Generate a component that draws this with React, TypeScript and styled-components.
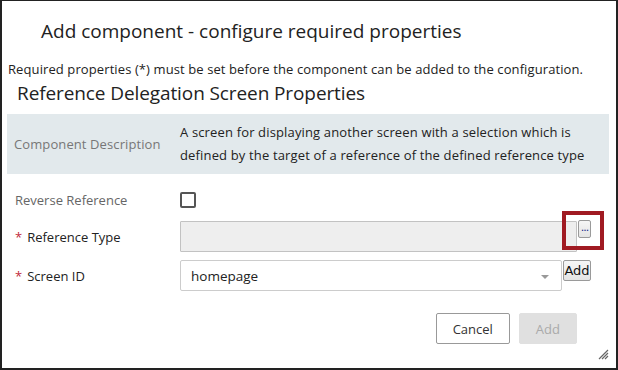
import styled, { createGlobalStyle } from "styled-components";

const GlobalStyle = createGlobalStyle`
  html, body {
    margin: 0;
    padding: 0;
    background: #ffffff;
  }
  body {
    font-family: "Open Sans", "Noto Sans", sans-serif;
    color: #222;
  }
`;

const Dialog = styled.div`
  position: relative;
  box-sizing: border-box;
  width: 618px;
  height: 370px;
  background: #fff;
  border: 2px solid #222;
  border-top-width: 1px;
  display: flex;
  flex-direction: column;
`;

const Title = styled.h1`
  margin: 0;
  padding: 17px 0 0 39px;
  height: 44px;
  box-sizing: border-box;
  font-size: 19px;
  font-weight: 400;
  line-height: 26px;
  color: #222;
`;

const Intro = styled.p`
  margin: 15px 0 0 6px;
  font-size: 13px;
  line-height: 18px;
  color: #222;
  letter-spacing: 0.1px;
`;

const SectionTitle = styled.h2`
  margin: 2px 0 0 15px;
  font-size: 19px;
  font-weight: 400;
  line-height: 26px;
  color: #222;
  letter-spacing: -0.1px;
`;

const DescriptionBox = styled.div`
  margin: 8px 7px 0 5px;
  height: 60px;
  background: #e2e9ec;
  display: flex;
  align-items: center;
  font-size: 13px;
  letter-spacing: 0.1px;
`;

const DescLabel = styled.div`
  width: 173px;
  padding-left: 7px;
  box-sizing: border-box;
  color: #777;
`;

const DescText = styled.div`
  line-height: 23px;
  color: #222;
  letter-spacing: 0.15px;
`;

const Form = styled.div`
  margin: 18px 0 0 13px;
  display: grid;
  grid-template-columns: 165px 1fr;
  grid-template-rows: 21px 31px 31px;
  row-gap: 8px;
  align-items: center;
  font-size: 13px;
`;

const Label = styled.div<{ $muted?: boolean; $top?: boolean }>`
  color: ${({ $muted }) => ($muted ? "#666" : "#222")};
  display: flex;
  gap: 5px;
  align-self: ${({ $top }) => ($top ? "start" : "center")};
  margin-top: ${({ $top }) => ($top ? "-1px" : "0")};
`;

const Star = styled.span`
  color: #c0283a;
`;

const Field = styled.div<{ $top?: boolean }>`
  display: flex;
  align-items: flex-start;
  align-self: ${({ $top }) => ($top ? "start" : "center")};
  gap: 1px;
`;

const CheckBox = styled.div`
  width: 12px;
  height: 12px;
  border: 2px solid #555;
  border-radius: 2px;
`;

const TextInput = styled.div`
  width: 397px;
  height: 31px;
  box-sizing: border-box;
  background: #eeeeee;
  border: 1px solid #c2c2c2;
  border-radius: 1px;
`;

const Select = styled.div`
  width: 382px;
  height: 31px;
  box-sizing: border-box;
  background: #fff;
  border: 1px solid #cccccc;
  border-radius: 2px;
  display: flex;
  align-items: center;
  justify-content: space-between;
  padding: 0 12px 0 10px;
  font-size: 13.5px;
  color: #222;
`;

const Caret = styled.span`
  width: 0;
  height: 0;
  margin-top: 2px;
  border-left: 4.5px solid transparent;
  border-right: 4.5px solid transparent;
  border-top: 4px solid #999;
`;

const HighlightWrap = styled.div`
  position: relative;
  margin-top: -1px;
`;

const Highlight = styled.div`
  position: absolute;
  left: -16px;
  top: -9px;
  width: 34px;
  height: 31px;
  border: 4px solid #a01a22;
  pointer-events: none;
`;

const SmallButton = styled.button`
  box-sizing: border-box;
  font-family: "DejaVu Sans", "Liberation Sans", sans-serif;
  background: linear-gradient(#f6f6f6, #e4e4e4);
  border: 1px solid #9a9a9a;
  border-radius: 2px;
  color: #111;
  padding: 0;
  display: flex;
  align-items: center;
  justify-content: center;
`;

const DotsButton = styled(SmallButton)`
  width: 13px;
  height: 18px;
  font-size: 11px;
  color: #1a2a8a;
  align-items: flex-end;
  padding-bottom: 3px;
  letter-spacing: -1px;
`;

const AddSmall = styled(SmallButton)`
  width: 28px;
  height: 21px;
  font-size: 13px;
`;

const Footer = styled.div`
  display: flex;
  justify-content: flex-end;
  gap: 9px;
  margin: 22px 39px 0 0;
`;

const FooterButton = styled.button<{ $disabled?: boolean }>`
  box-sizing: border-box;
  height: 31px;
  padding: 0 16px;
  font-family: "Open Sans", "Noto Sans", sans-serif;
  font-size: 13px;
  border-radius: 2px;
  border: 1px solid ${({ $disabled }) => ($disabled ? "#e0e0e0" : "#999")};
  background: ${({ $disabled }) => ($disabled ? "#e0e0e0" : "#fff")};
  color: ${({ $disabled }) => ($disabled ? "#aaa" : "#333")};
`;

const Grip = styled.svg`
  position: absolute;
  right: 7px;
  bottom: 8px;
`;

export default function App() {
  return (
    <>
      <GlobalStyle />
      <Dialog>
        <Title>Add component - configure required properties</Title>
        <Intro>
          Required properties (*) must be set before the component can be added to the configuration.
        </Intro>
        <SectionTitle>Reference Delegation Screen Properties</SectionTitle>
        <DescriptionBox>
          <DescLabel>Component Description</DescLabel>
          <DescText>
            A screen for displaying another screen with a selection which is
            <br />
            defined by the target of a reference of the defined reference type
          </DescText>
        </DescriptionBox>

        <Form>
          <Label $muted $top>Reverse Reference</Label>
          <Field $top>
            <CheckBox />
          </Field>

          <Label>
            <Star>*</Star>Reference Type
          </Label>
          <Field>
            <TextInput />
            <HighlightWrap>
              <DotsButton>...</DotsButton>
              <Highlight />
            </HighlightWrap>
          </Field>

          <Label>
            <Star>*</Star>Screen ID
          </Label>
          <Field>
            <Select>
              homepage
              <Caret />
            </Select>
            <AddSmall>Add</AddSmall>
          </Field>
        </Form>

        <Footer>
          <FooterButton>Cancel</FooterButton>
          <FooterButton $disabled>Add</FooterButton>
        </Footer>

        <Grip width="12" height="12" viewBox="0 0 12 12">
          <path d="M11 2 L2 11 M11 5 L5 11 M11 8 L8 11" stroke="#666" strokeWidth="1.2" />
        </Grip>
      </Dialog>
    </>
  );
}
